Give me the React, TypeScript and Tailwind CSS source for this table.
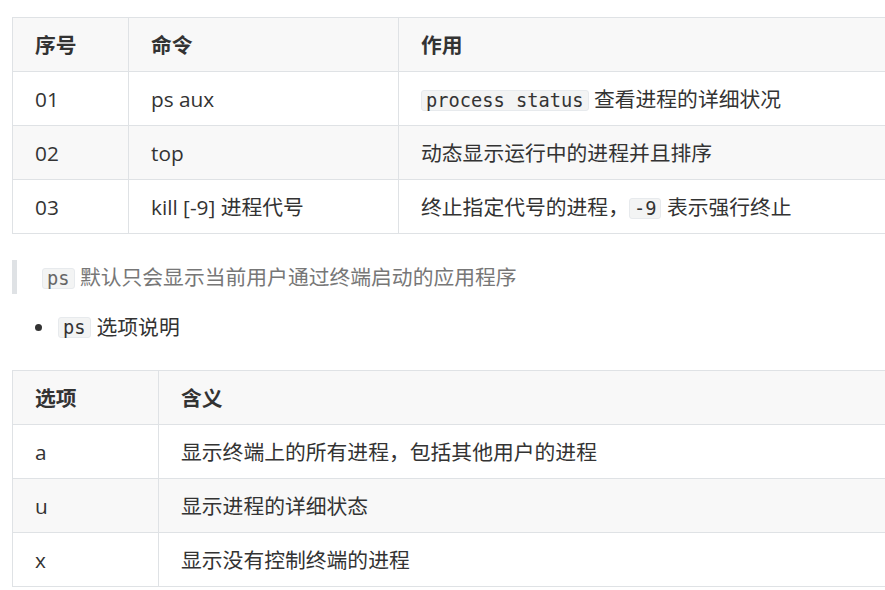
import React from "react";

const font = { fontFamily: '"Open Sans", "Noto Sans CJK SC", sans-serif' };

function Code({ children, gray }: { children: React.ReactNode; gray?: boolean }) {
  return (
    <code
      className={`inline-block rounded-[3px] border border-[#e7eaed] bg-[#f3f4f4] px-[4px] text-[18.7px] leading-[19px] ${gray ? "text-[#666]" : "text-[#333]"}`}
      style={{ fontFamily: '"DejaVu Sans Mono", "Liberation Mono", monospace' }}
    >
      {children}
    </code>
  );
}

function Row({ cells, even, widths, head }: { cells: React.ReactNode[]; even?: boolean; widths: string[]; head?: boolean }) {
  return (
    <tr className={`h-[54px] ${even || head ? "bg-[#f8f8f8]" : "bg-white"}`}>
      {cells.map((c, i) => {
        const Tag = head ? "th" : "td";
        return (
          <Tag
            key={i}
            className={`border border-[#dfe2e5] px-[22px] py-0 text-left align-middle leading-[34px] ${head ? "font-bold" : "font-normal"} ${widths[i]}`}
          >
            {c}
          </Tag>
        );
      })}
    </tr>
  );
}

export default function App() {
  const w1 = ["w-[116px]", "w-[270px]", ""];
  const w2 = ["w-[146px]", ""];
  return (
    <div className="h-[590px] w-[885px] overflow-hidden bg-white text-[20.8px] text-[#333]" style={font}>
      <div className="pl-[12px] pt-[17px]">
        <table className="w-[900px] table-fixed border-collapse">
          <colgroup>
            <col className="w-[116px]" />
            <col className="w-[270px]" />
            <col />
          </colgroup>
          <thead>
            <Row head widths={w1} cells={["序号", "命令", "作用"]} />
          </thead>
          <tbody>
            <Row widths={w1} cells={["01", "ps aux", <><Code>process status</Code> 查看进程的详细状况</>]} />
            <Row even widths={w1} cells={["02", "top", "动态显示运行中的进程并且排序"]} />
            <Row widths={w1} cells={["03", "kill [-9] 进程代号", <>终止指定代号的进程，<Code>-9</Code> 表示强行终止</>]} />
          </tbody>
        </table>

        <div className="mt-[26px] h-[34px] border-l-[5px] border-[#dfe2e5] pl-[25px] leading-[34px] text-[#777]">
          <Code gray>ps</Code> 默认只会显示当前用户通过终端启动的应用程序
        </div>

        <ul className="mt-[16px] flex h-[34px] items-center">
          <li className="flex items-center leading-[34px]">
            <span className="ml-[23px] mr-[16px] inline-block h-[7px] w-[7px] rounded-full bg-[#333]" />
            <Code>ps</Code>
            <span className="ml-[6px]">选项说明</span>
          </li>
        </ul>

        <table className="mt-[26px] w-[900px] table-fixed border-collapse">
          <colgroup>
            <col className="w-[146px]" />
            <col />
          </colgroup>
          <thead>
            <Row head widths={w2} cells={["选项", "含义"]} />
          </thead>
          <tbody>
            <Row widths={w2} cells={["a", "显示终端上的所有进程，包括其他用户的进程"]} />
            <Row even widths={w2} cells={["u", "显示进程的详细状态"]} />
            <Row widths={w2} cells={["x", "显示没有控制终端的进程"]} />
          </tbody>
        </table>
      </div>
    </div>
  );
}
